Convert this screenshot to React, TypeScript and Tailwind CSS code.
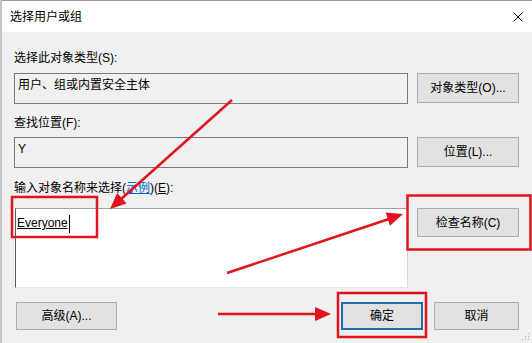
import React from 'react';

const Btn: React.FC<{ label: string; className?: string }> = ({ label, className }) => (
  <div
    className={`flex items-center justify-center bg-[#e1e1e1] border border-[#adadad] text-[12px] leading-[16px] ${className ?? ''}`}
  >
    {label}
  </div>
);

const App: React.FC = () => {
  return (
    <div className="w-[532px] h-[343px] bg-[#f0f0f0] relative overflow-hidden flex flex-col text-[12px] text-black font-['Liberation_Sans','Noto_Sans_CJK_SC',sans-serif]">
      {/* window edge */}
      <div className="absolute left-0 top-0 bottom-0 w-[2px] bg-[#c4c4c4]" />

      {/* Title bar */}
      <div className="h-[32px] bg-white border-t border-[#9a9a9a] flex items-center justify-between pl-[10px] pr-[9px]">
        <span className="text-[12px] leading-[16px]">选择用户或组</span>
        <svg width="10" height="10" viewBox="0 0 10 10">
          <path d="M0.5 0.5 L9.5 9.5 M9.5 0.5 L0.5 9.5" stroke="#111" strokeWidth="1" />
        </svg>
      </div>

      <div className="flex flex-col pl-[14px] pr-[13px]">
        <div className="mt-[18px] leading-[16px]">选择此对象类型(S):</div>
        <div className="mt-[7px] flex gap-[9px]">
          <div className="w-[394px] h-[31px] border border-[#7a7a7a] pl-[3px] pt-[3px] leading-[16px]">
            用户、组或内置安全主体
          </div>
          <Btn label="对象类型(O)..." className="w-[102px] h-[30px]" />
        </div>

        <div className="mt-[11px] leading-[16px]">查找位置(F):</div>
        <div className="mt-[6px] flex gap-[9px]">
          <div className="w-[394px] h-[31px] border border-[#7a7a7a] pl-[3px] pt-[3px] leading-[16px]">Y</div>
          <Btn label="位置(L)..." className="w-[102px] h-[30px]" />
        </div>

        <div className="mt-[12px] leading-[16px]">
          输入对象名称来选择(<span className="text-[#0066cc] underline">示例</span>)(<span className="underline">E</span>):
        </div>
        <div className="mt-[12px] flex gap-[9px] items-start">
          <div className="ml-[1px] w-[393px] h-[80px] bg-white border-t border-l border-t-[#a0a0a0] border-l-[#5a5a5a] border-r border-b border-r-[#d8d8d8] border-b-[#e8e8e8] pl-[1px] pt-[6px] leading-[16px]">
            <span className="underline">Everyone</span>
            <span className="inline-block w-px h-[18px] bg-black align-middle ml-[1px]" />
          </div>
          <Btn label="检查名称(C)" className="w-[102px] h-[29px]" />
        </div>

        <div className="mt-[14px] flex items-center h-[28px]">
          <Btn label="高级(A)..." className="ml-[2px] w-[101px] h-[28px]" />
          <div className="flex-1" />
          <div className="w-[82px] h-[28px] flex items-center justify-center bg-[#e1e1e1] border-2 border-[#1c6fb0] leading-[16px]">
            确定
          </div>
          <Btn label="取消" className="ml-[11px] w-[85px] h-[28px]" />
        </div>
      </div>

      {/* resize grip */}
      <svg className="absolute right-[2px] bottom-[2px]" width="8" height="8" viewBox="0 0 8 8">
        <rect x="6" y="0" width="1" height="1" fill="#b0b0b0" />
        <rect x="3" y="3" width="1" height="1" fill="#b0b0b0" />
        <rect x="6" y="3" width="1" height="1" fill="#b0b0b0" />
        <rect x="0" y="6" width="1" height="1" fill="#b0b0b0" />
        <rect x="3" y="6" width="1" height="1" fill="#b0b0b0" />
        <rect x="6" y="6" width="1" height="1" fill="#b0b0b0" />
      </svg>

      {/* annotations */}
      <svg className="absolute inset-0 pointer-events-none" width="532" height="343" viewBox="0 0 532 343">
        <g fill="none" stroke="#e0141c" strokeWidth="2.5">
          <rect x="12" y="197" width="85" height="40" />
          <rect x="407.5" y="195.5" width="123" height="54" />
          <rect x="338" y="293" width="88" height="44" />
          <line x1="232" y1="100" x2="120" y2="200" />
          <line x1="227" y1="273" x2="389" y2="219" />
          <line x1="218" y1="314" x2="316" y2="314" />
        </g>
        <g fill="#e0141c">
          <polygon points="110,209 126.6,203.5 117.2,193.1" />
          <polygon points="403,214 390,225.7 385.6,212.5" />
          <polygon points="331,314 315,307 315,321" />
        </g>
      </svg>
    </div>
  );
};

export default App;
